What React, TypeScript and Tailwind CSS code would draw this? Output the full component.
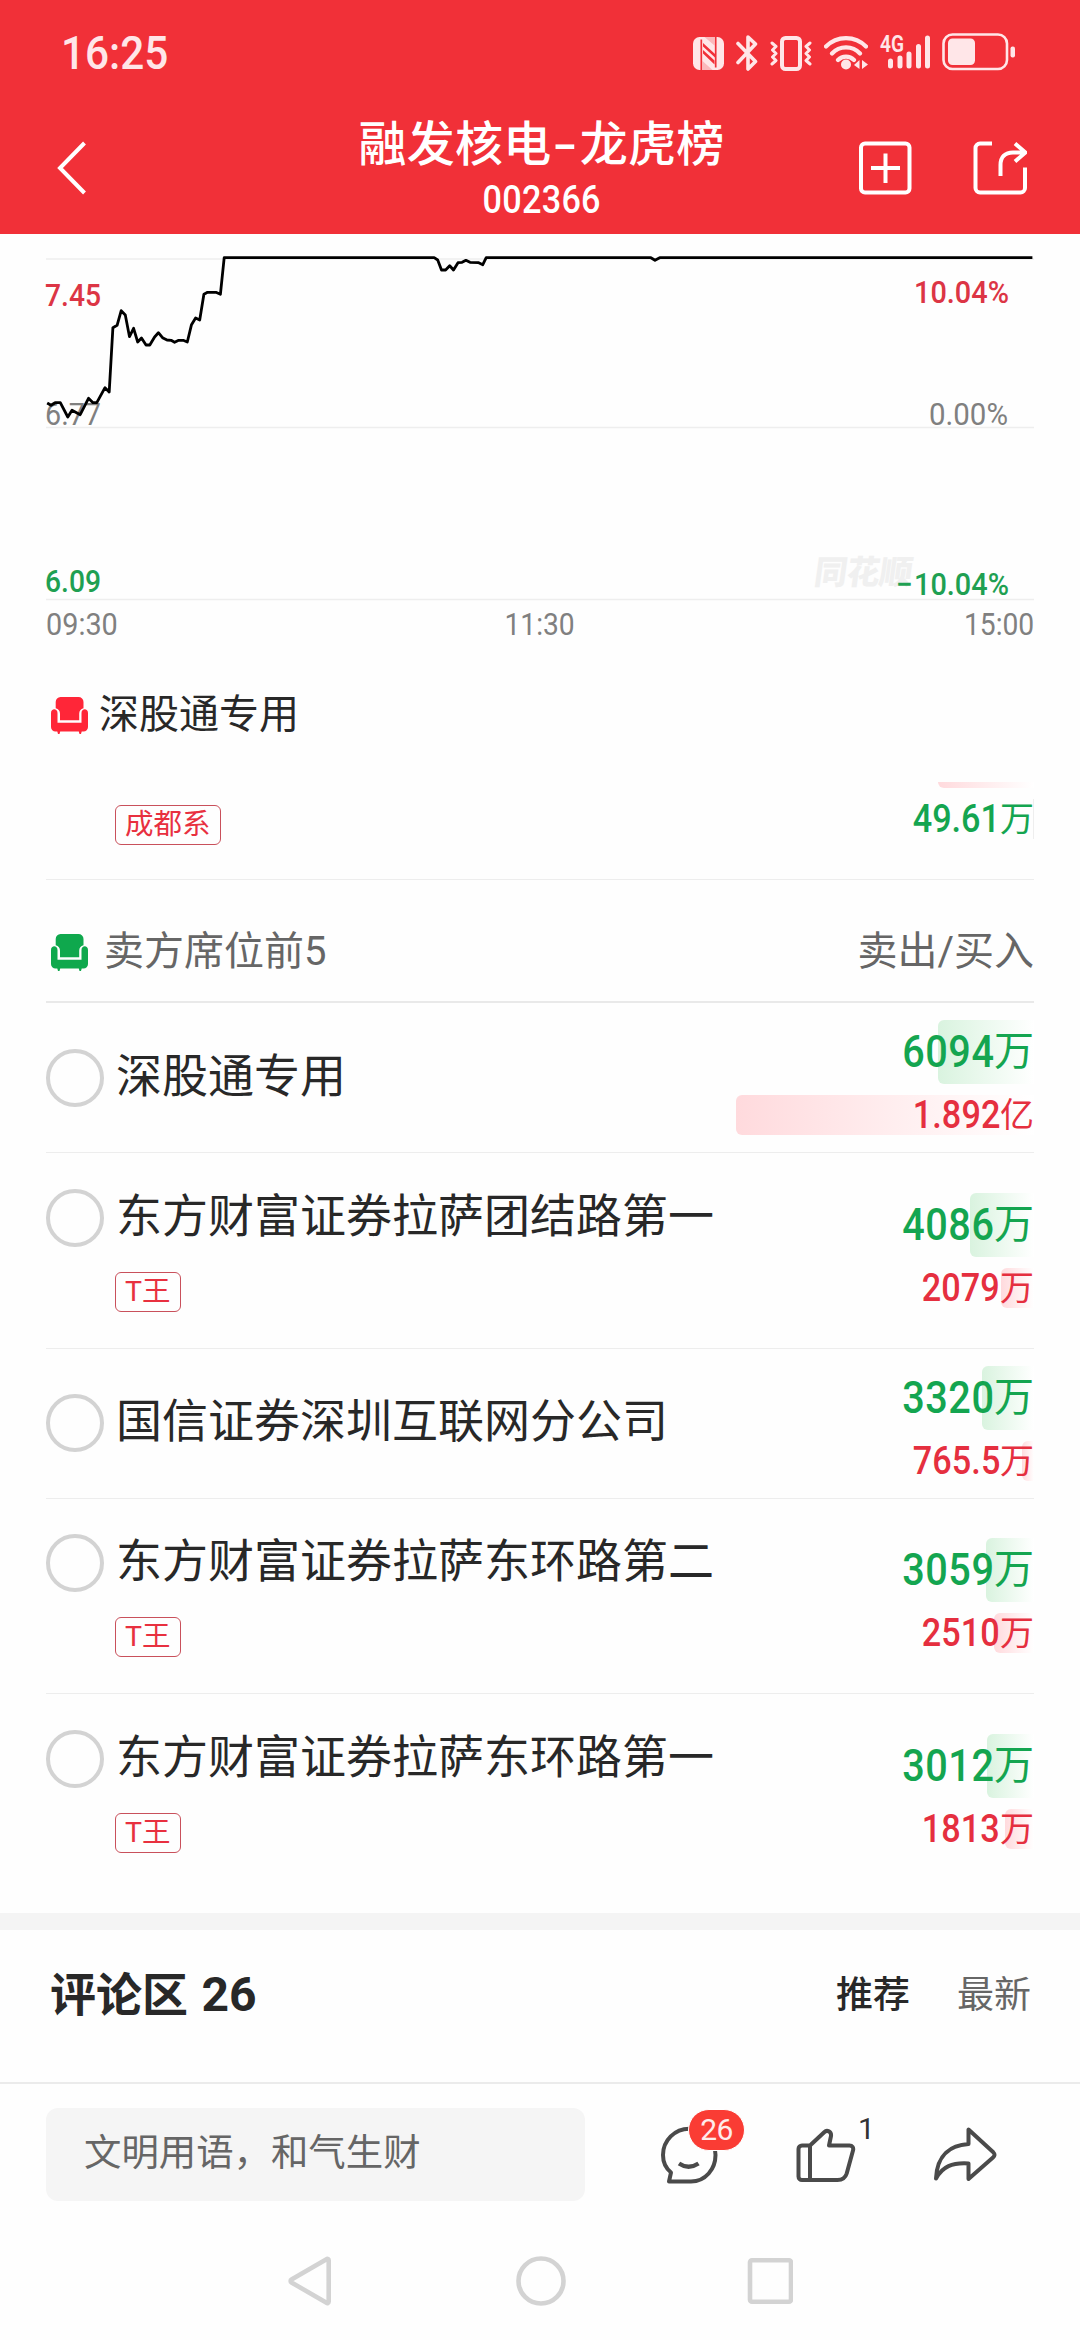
import React from 'react';

type Seat = {
  name: string;
  tag?: string;
  sell: string;
  sellUnit: string;
  buy: string;
  buyUnit: string;
  // amounts in 万, used for the bar widths
  sellValue: number;
  buyValue: number;
};

const seats: Seat[] = [
  { name: '深股通专用', sell: '6094', sellUnit: '万', buy: '1.892', buyUnit: '亿', sellValue: 6094, buyValue: 18920 },
  { name: '东方财富证券拉萨团结路第一', tag: 'T王', sell: '4086', sellUnit: '万', buy: '2079', buyUnit: '万', sellValue: 4086, buyValue: 2079 },
  { name: '国信证券深圳互联网分公司', sell: '3320', sellUnit: '万', buy: '765.5', buyUnit: '万', sellValue: 3320, buyValue: 765.5 },
  { name: '东方财富证券拉萨东环路第二', tag: 'T王', sell: '3059', sellUnit: '万', buy: '2510', buyUnit: '万', sellValue: 3059, buyValue: 2510 },
  { name: '东方财富证券拉萨东环路第一', tag: 'T王', sell: '3012', sellUnit: '万', buy: '1813', buyUnit: '万', sellValue: 3012, buyValue: 1813 },
];

const barWidth = (value: number) => value * 0.01575;

const pricePoints =
  '1.2,146 5,148.3 9.1,145.7 14.3,145.7 21.8,160 26,153.3 34.2,157.7 42.5,141.3 47,145.7 50.8,145.7 59,130.7 63.2,135 66.9,70.7 71.1,68.3 75.2,53.7 79.3,58 83.5,79.7 87.6,71.3 91.7,85 95.5,81 100,88 103.8,88 108.6,80 112.4,75.7 116.5,80.7 121,83 125.1,83.3 128.6,85.3 132.7,83.3 137.2,83.3 141.3,85 145.5,67.7 149.6,61 153.7,63 157.9,37.3 161.6,35.3 169.9,35.3 174.4,37.3 178.2,0.7 388.2,0.7 391.7,3 395.5,13 399.6,13 403.7,8.7 407.5,13 412,5.7 416.1,5.3 419.9,3.3 424,5.3 432.7,5.7 436.8,7.7 440.2,0.7 604.9,0.7 609,3.3 613.7,0.7 986.4,0.7';

const StatusBar = () => (
  <div className="flex h-[101px] items-start justify-between pl-[61px] pr-[64px] pt-[33px] text-[#ffe6e8]">
    <span className="-mt-2 origin-left scale-x-[0.92] text-[46px] font-medium leading-[56px]">16:25</span>
    <div className="flex items-start">
      {/* NFC */}
      <svg width="31" height="33" viewBox="0 0 31 33" className="mt-1" fill="none">
        <rect width="31" height="33" rx="6.500" fill="currentColor" />
        <path d="M8.300 2.500V33M22.700 0v30.500" stroke="#f13038" strokeWidth="1.700" />
        <path d="M10 6l12 11v3.500L10 9.500zM10 13l11.500 10.500v4L10 16.500z" fill="#f13038" />
        <path d="M11.500 0h10v8.500zM9.500 24v9h10z" fill="#f13038" opacity="0.25" />
      </svg>
      {/* Bluetooth */}
      <svg width="22" height="36" viewBox="0 0 22 36" className="ml-3 mt-0.5" fill="none" stroke="currentColor" strokeWidth="3.600" strokeLinecap="round" strokeLinejoin="round">
        <path d="M2 8.500L19.500 26.500L12 34V2L19.500 9L2 27.500" />
      </svg>
      {/* Vibrate */}
      <svg width="42" height="35" viewBox="0 0 42 35" className="ml-3 mt-[3px]" fill="none" stroke="currentColor" strokeWidth="3" strokeLinecap="round" strokeLinejoin="round">
        <rect x="12" y="2" width="18" height="31" rx="3.500" strokeWidth="4" />
        <path d="M2 7l4 3.500-3.500 3.500L6 17.500 2.500 21 6 24.500 2 28M40 7l-4 3.500 3.500 3.500L36 17.500l3.500 3.500-3.500 3.500 4 3.500" />
      </svg>
      {/* Wifi */}
      <svg width="44" height="36" viewBox="0 0 44 36" className="ml-3 mt-px" fill="none" stroke="currentColor" strokeWidth="4.200" strokeLinecap="round">
        <path d="M2 12.500a28 28 0 0 1 40 0M8 19.500a19 19 0 0 1 28 0M14 26a11 11 0 0 1 16 0" />
        <circle cx="22" cy="30.500" r="5" fill="currentColor" stroke="none" />
        <path d="M35.500 26v9l-5.500-4zM38 26v9l6-4.500z" fill="currentColor" stroke="none" />
      </svg>
      {/* Signal */}
      <svg width="51" height="38" viewBox="0 0 51 38" className="ml-3 overflow-visible" fill="none" stroke="currentColor" strokeWidth="5" strokeLinecap="round">
        <text x="0" y="19" fontSize="23" fontWeight="600" textLength="24" lengthAdjust="spacingAndGlyphs" fill="currentColor" stroke="none">4G</text>
        <path d="M10.500 28v5M20 25v8M29 21v12M38.500 13.500v19.500M47.500 5v28" />
      </svg>
      {/* Battery */}
      <svg width="74" height="38" viewBox="0 0 74 38" className="ml-[11px]" fill="none">
        <rect x="1.500" y="1.500" width="63.500" height="34.500" rx="9" stroke="currentColor" strokeWidth="2.600" />
        <rect x="6" y="5.500" width="27" height="26.500" rx="4.500" fill="currentColor" />
        <rect x="68.500" y="13.500" width="4.500" height="11" rx="2" fill="currentColor" />
      </svg>
    </div>
  </div>
);

const NavBar = () => (
  <div className="grid h-[133px] grid-cols-[1fr_auto_1fr] items-center pl-[56px] pr-[53px] text-white">
    <svg width="32" height="54" viewBox="0 0 32 54" fill="none" stroke="currentColor" strokeWidth="4">
      <path d="M28.500 2L4 27l24.500 25" />
    </svg>
    <div className="flex flex-col items-center pt-2">
      <h1 className="text-[48px] font-medium leading-[56px] tracking-[0.2px]">
        融发核电<span className="mx-[6px] inline-block scale-x-150">-</span>龙虎榜
      </h1>
      <p className="scale-x-90 text-[38px] font-medium leading-[54px] tracking-[0.3px]">002366</p>
    </div>
    <div className="flex justify-end gap-[61px]">
      <svg width="54" height="54" viewBox="0 0 54 54" fill="none" stroke="currentColor" strokeWidth="4">
        <rect x="3" y="2.500" width="48.500" height="49" rx="4" />
        <path d="M13 27h29M27.500 12.500v29.500" />
      </svg>
      <svg width="54" height="54" viewBox="0 0 54 54" fill="none" stroke="currentColor" strokeWidth="4">
        <path d="M19 2.500H7a4.500 4.500 0 0 0-4.500 4.500v40a4.500 4.500 0 0 0 4.500 4.500h40.500a4.500 4.500 0 0 0 4.500-4.500V26.500" />
        <path d="M27.500 35V24c0-8 4.500-12.500 12.500-12.500h12M42 2.500l10.500 9L42 20.500" />
      </svg>
    </div>
  </div>
);

const PriceChart = () => (
  <section className="px-[46px] pt-[23px] text-[#808080]">
    <svg width="988" height="343" viewBox="0 0 988 343" className="overflow-visible" fontSize="31">
      <path d="M0 2h988M0 170.500h988M0 342.500h988" stroke="#eeeeee" strokeWidth="1.500" />
      <text x="768" y="327" fontSize="33" fontWeight="900" fill="#f0f0f0" textLength="98" transform="skewX(-8) translate(45 0)">同花顺</text>
      <g fontWeight="500">
        <text x="-1" y="49" fill="#dc3545" textLength="56" lengthAdjust="spacingAndGlyphs">7.45</text>
        <text x="868" y="46" fill="#dc3545" textLength="95" lengthAdjust="spacingAndGlyphs">10.04%</text>
        <text x="-1" y="335" fill="#1fa052" textLength="56" lengthAdjust="spacingAndGlyphs">6.09</text>
        <text x="868" y="338" fill="#1fa052" textLength="95" lengthAdjust="spacingAndGlyphs">10.04%</text>
        <text x="850" y="338" fill="#1fa052" textLength="17" lengthAdjust="spacingAndGlyphs">−</text>
      </g>
      <text x="-1" y="167.500" fill="currentColor" textLength="56" lengthAdjust="spacingAndGlyphs">6.77</text>
      <text x="883" y="167.500" fill="currentColor" textLength="79" lengthAdjust="spacingAndGlyphs">0.00%</text>
      <polyline points={pricePoints} fill="none" stroke="#000000" strokeWidth="2.800" strokeLinejoin="round" />
    </svg>
    <div className="flex justify-between text-[31px] leading-[50px]">
      <span className="origin-left scale-x-[0.93]">09:30</span>
      <span className="scale-x-[0.91]">11:30</span>
      <span className="origin-right scale-x-[0.91]">15:00</span>
    </div>
  </section>
);

const SeatIcon = ({ className }: { className: string }) => (
  <svg width="37" height="37" viewBox="0 0 37 37" className={className} fill="currentColor">
    <path d="M9.500 0h18a5 5 0 0 1 5 5v6.200c-2.800.8-4.300 2.700-4.300 5.500v6.500H9v-6.500c0-2.800-1.500-4.700-4.300-5.500V5a5 5 0 0 1 4.800-5z" />
    <path d="M0 16c0-5 6.500-5 6.500 0v9.700h24V16c0-5 6.500-5 6.500 0v14a4.500 4.500 0 0 1-4.500 4.500h-1.800l-.7 2.500h-1.500l-.7-2.500H9.200L8.500 37H7l-.7-2.500H4.500A4.500 4.500 0 0 1 0 30z" />
  </svg>
);

const Tag = ({ children }: { children: React.ReactNode }) => (
  <span className="inline-block h-10 rounded-md border border-[#c9505b] px-[9px] text-[28.500px] leading-[37px] text-[#e8303f]">
    {children}
  </span>
);

const SeatRow = ({ seat, last }: { seat: Seat; last: boolean }) => (
  <li className={`flex items-center justify-between border-b ${last ? 'border-transparent' : 'border-[#ededed]'} ${seat.tag ? 'h-[195.500px]' : 'h-[150px]'}`}>
    <div>
      <div className="flex items-center gap-3">
        <span className="h-[58px] w-[58px] rounded-full border-4 border-[#d3d3d3]" />
        <span className="-mt-[4px] text-[46px] leading-[58px] text-[#282828]">{seat.name}</span>
      </div>
      {seat.tag && (
        <div className="ml-[69px] mt-[25px] flex">
          <Tag>{seat.tag}</Tag>
        </div>
      )}
    </div>
    <div className="flex w-[300px] flex-col items-end gap-[11px] font-medium">
      <div className="relative h-16 text-[44px] leading-[64px] text-[#14a550]">
        <div className="absolute right-0 top-0 h-16 rounded-l-md bg-linear-to-r from-[#d9f3df] to-white" style={{ width: barWidth(seat.sellValue) }} />
        <div className="relative flex">
          <span className="origin-right scale-x-90 tracking-[0.6px]">{seat.sell}</span>
          <span className="text-[40px] font-normal">{seat.sellUnit}</span>
        </div>
      </div>
      <div className="relative h-10 text-[38px] leading-10 text-[#e52f3f]">
        <div className="absolute right-0 top-0 h-10 rounded-l-md bg-linear-to-r from-[#ffdadd] to-white" style={{ width: barWidth(seat.buyValue) }} />
        <div className="relative flex">
          <span className="origin-right scale-x-90 tracking-[0.1px]">{seat.buy}</span>
          <span className="text-[34px] font-normal">{seat.buyUnit}</span>
        </div>
      </div>
    </div>
  </li>
);

const Comments = () => (
  <section className="flex h-[152px] items-start justify-between pl-[50px] pr-[49px] pt-[37px]">
    <h2 className="text-[46px] font-bold leading-[56px] text-[#282828]">
      评论区 <span className="ml-0.5 text-[48px]">26</span>
    </h2>
    <div className="flex gap-[47px] text-[37px] leading-[58px]">
      <span className="font-medium text-[#282828]">推荐</span>
      <span className="text-[#666666]">最新</span>
    </div>
  </section>
);

const ActionBar = () => (
  <div className="flex h-[144px] items-start border-t-2 border-[#ebebeb] px-[46px] pt-6 text-[#4a4a4a]">
    <div className="h-[93px] w-[539px] rounded-xl bg-[#f5f5f5] pl-[38px] text-[37.400px] leading-[90px] text-[#666666]">
      文明用语，和气生财
    </div>
    <div className="relative ml-[75px] mt-[18px]">
      <svg width="58" height="58" viewBox="0 0 58 58" fill="none" stroke="currentColor" strokeWidth="4" strokeLinejoin="round">
        <path d="M9 55.500L11 46.500C5 41.500 3 35.500 3 29a26 26 0 0 1 52.500 0C55.500 43 45.500 55.500 31 55.500z" />
        <path d="M19 37.500q9.500 6.500 19.500 0" strokeWidth="4.200" />
      </svg>
      <span className="absolute -top-[17px] left-[28px] h-[42px] w-[57px] rounded-full border border-white bg-[#fa3c34] text-center text-[30px] leading-[40px] tracking-[-0.5px] text-white/90">26</span>
    </div>
    <div className="relative ml-[78px] mt-5">
      <svg width="60" height="54" viewBox="0 0 60 54" fill="none" stroke="currentColor" strokeWidth="4" strokeLinejoin="round">
        <path d="M14 17.500H6a3.500 3.500 0 0 0-3.500 3.500v27.500A3.500 3.500 0 0 0 6 52h35.500c5 0 8-2.500 9.200-6.500l6.300-23c.8-3-.7-5-3.500-5H33l2-9.500c.6-4.500-4-6.500-6.800-3.800L14 17.500" />
        <path d="M14 17v35" />
      </svg>
      <span className="absolute -top-[17px] left-[62px] text-[30px] leading-[36px] text-[#333333]">1</span>
    </div>
    <svg width="64" height="56" viewBox="0 0 64 56" className="ml-[77px] mt-[18px]" fill="none" stroke="currentColor" strokeWidth="4" strokeLinejoin="round">
      <path d="M35.500 3.500V18C18 19 4 28.500 3 52.500 9.500 40.500 19 36.500 35.500 37.500V53L60 31.500c2-1.800 2-3.500.3-5.200z" />
    </svg>
  </div>
);

const SystemNav = () => (
  <div className="flex items-center justify-center pt-[30px] text-[#d3d3d3]">
    <svg width="505" height="50" viewBox="0 0 505 50" fill="none" stroke="currentColor" strokeWidth="4.600" strokeLinejoin="round">
      <path d="M38.500 3.200c1-.7 2.200 0 2.200 1.200v41.200c0 1.200-1.200 1.900-2.200 1.200L3.500 26.500c-1.200-.8-1.200-2.200 0-3z" />
      <circle cx="253" cy="25" r="22.500" />
      <rect x="462" y="4.300" width="41" height="41.400" rx="2" />
    </svg>
  </div>
);

const App = () => {
  return (
    <div className="h-[2340px] w-[1080px] overflow-hidden bg-[#fefefe] font-['Roboto','Noto_Sans_CJK_SC',sans-serif]">
      <header className="bg-[#f13038]">
        <StatusBar />
        <NavBar />
      </header>

      <PriceChart />

      <main className="px-[46px]">
        <div className="flex items-center gap-[11px] pl-[5px] pt-[35px]">
          <SeatIcon className="text-[#ff2638]" />
          <span className="text-[40px] leading-[60px] text-[#282828]">深股通专用</span>
        </div>

        {/* partly scrolled row */}
        <div className="mt-[37px] flex h-[98px] justify-between border-b border-[#ededed]">
          <div className="ml-[69px] mt-[23px]">
            <Tag>成都系</Tag>
          </div>
          <div className="flex flex-col items-end">
            <div className="h-1.5 w-24 rounded-bl-md bg-linear-to-r from-[#ffdadd] to-white" />
            <div className="mt-[11px] flex border-r border-[#eeeeee] text-[38px] font-medium leading-10 text-[#14a550]">
              <span className="origin-right scale-x-90">49.61</span>
              <span className="-mr-px text-[34px] font-normal">万</span>
            </div>
          </div>
        </div>

        <div className="flex h-[123px] items-center justify-between border-b-2 border-[#e9e9e9] pt-[23px] text-[40px] text-[#666666]">
          <div className="flex items-center gap-4 pl-[5px]">
            <SeatIcon className="text-[#0fa84d]" />
            <span>卖方席位前5</span>
          </div>
          <span>卖出/买入</span>
        </div>

        <ul>
          {seats.map((seat, i) => (
            <SeatRow key={i} seat={seat} last={i === seats.length - 1} />
          ))}
        </ul>
      </main>

      <div className="mt-[23.500px] h-[17px] bg-[#f4f4f4]" />
      <Comments />
      <ActionBar />
      <SystemNav />
    </div>
  );
};

export default App;
